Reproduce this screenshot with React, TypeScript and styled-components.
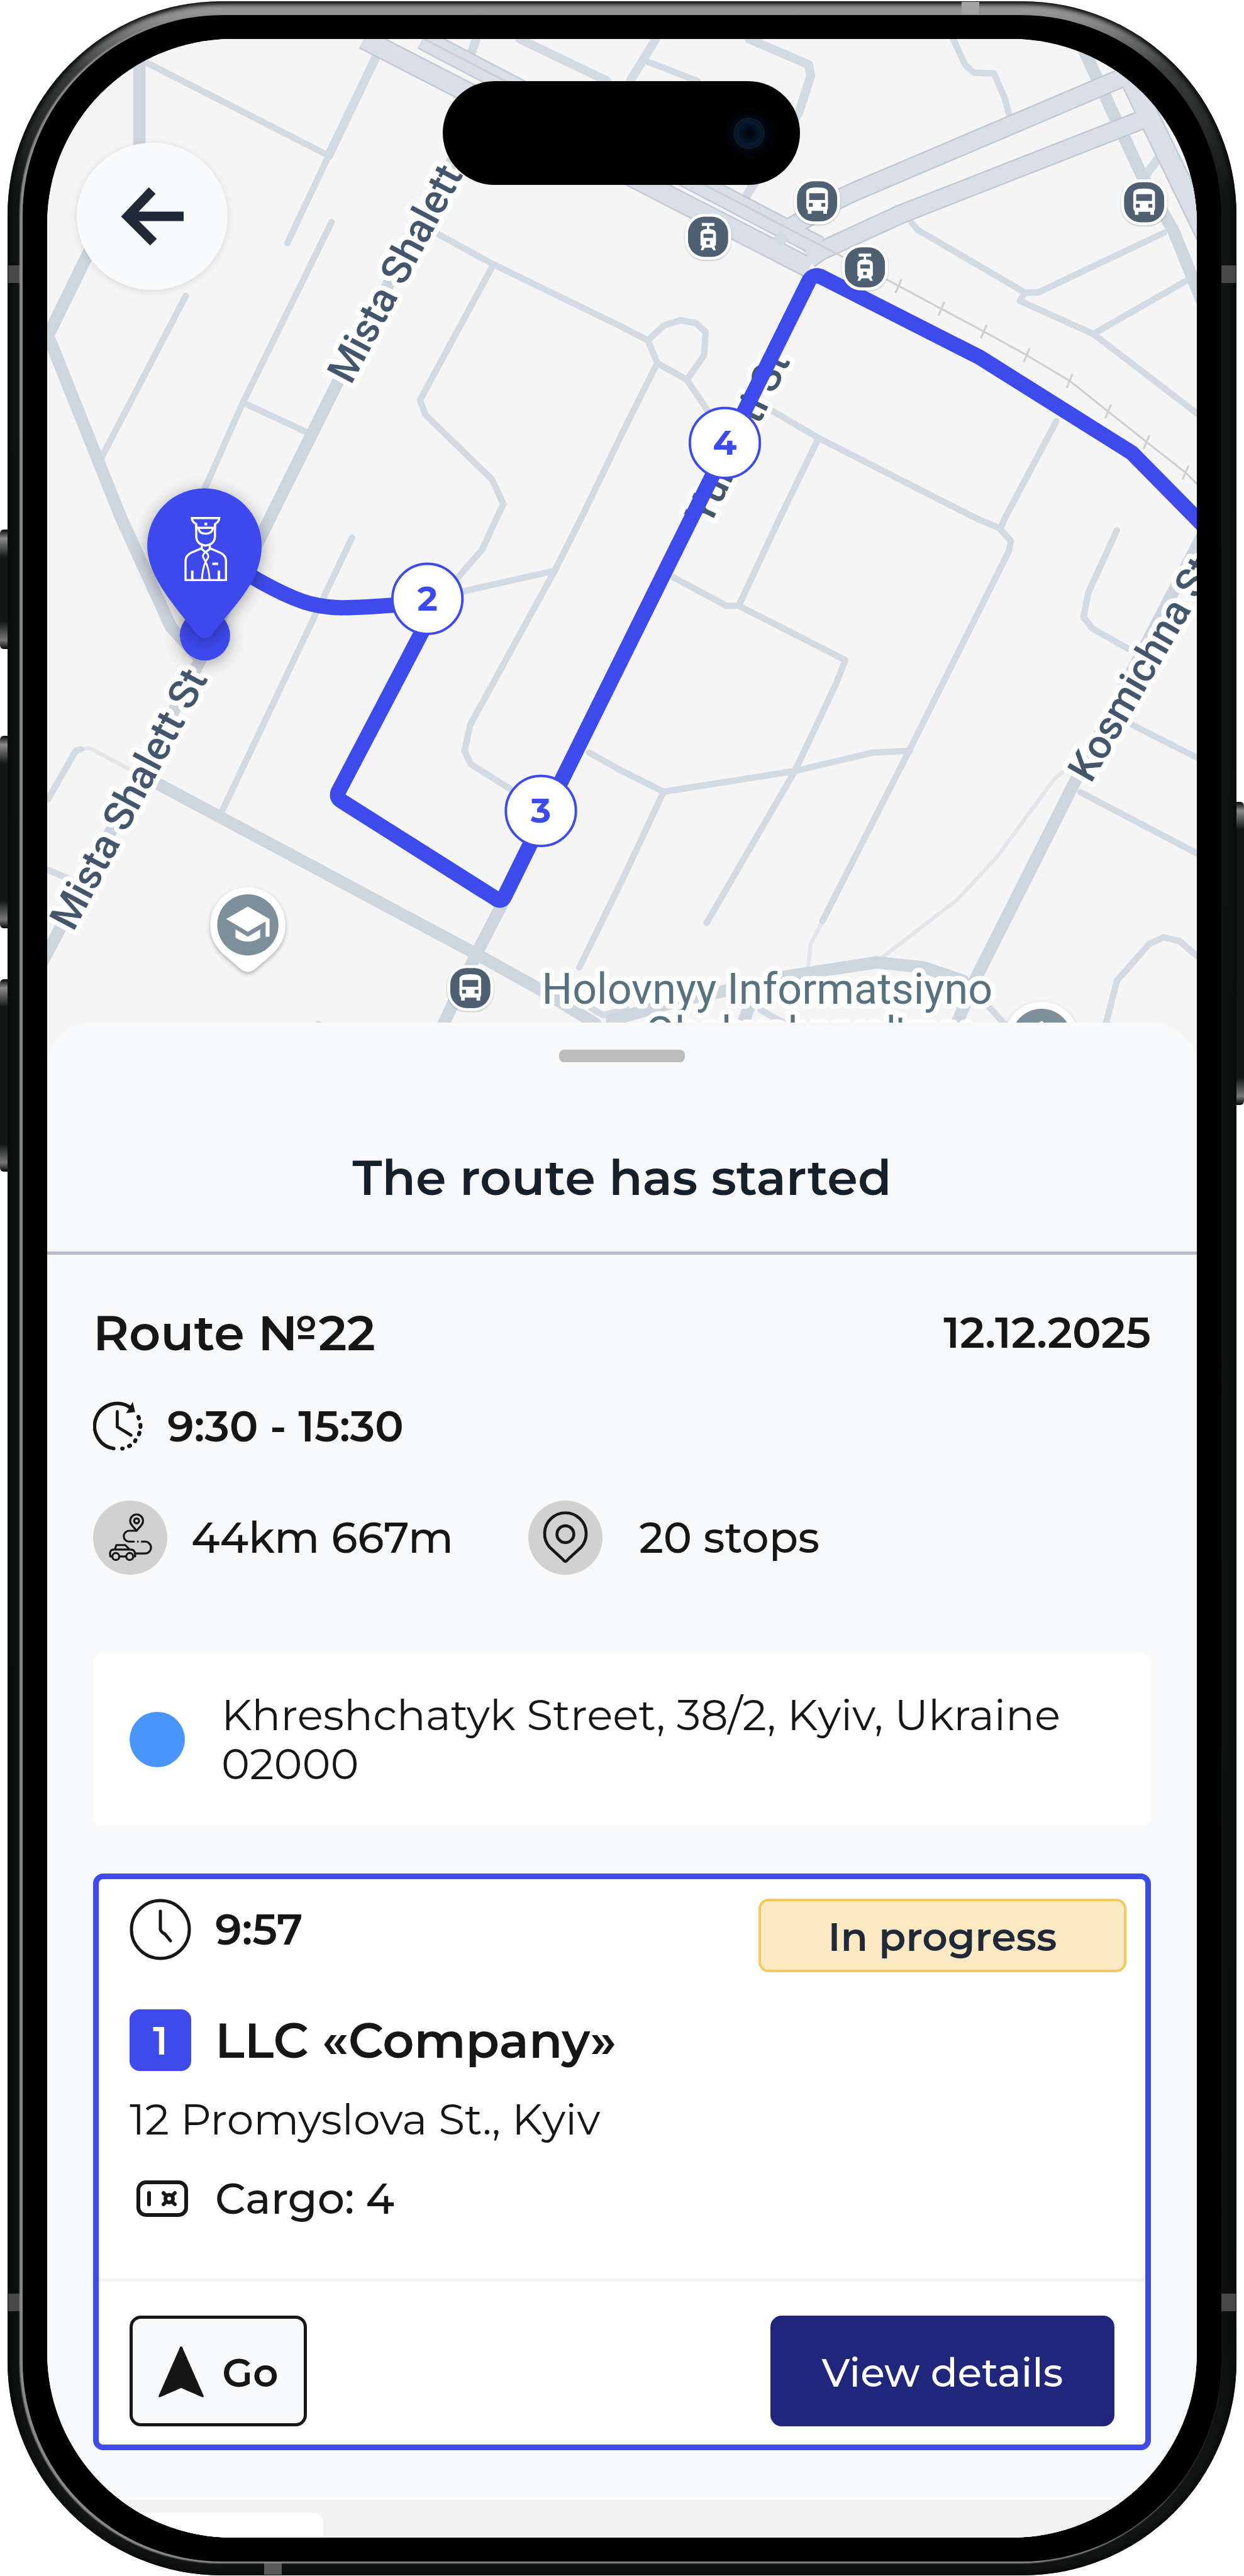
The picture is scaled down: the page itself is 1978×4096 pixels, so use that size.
import React from "react";
import styled, { createGlobalStyle } from "styled-components";

const FONT = `"Montserrat", "Inter", "Open Sans", sans-serif`;
const INK = "#161616";
const BLUE = "#3d4aec";
const SURFACE = "#f8f9fb";

const GlobalStyle = createGlobalStyle`
  *, *::before, *::after { box-sizing: border-box; }
  body { margin: 0; background: #fff; font-family: ${FONT}; color: ${INK}; }
  h1, h2, h3, p { margin: 0; font-weight: inherit; font-size: inherit; }
  button { font-family: inherit; cursor: pointer; margin: 0; padding: 0; }
  svg { display: block; flex: none; }
`;

/* ---------- device ---------- */

const Page = styled.div`
  padding: 2px 12px;
`;

const Frame = styled.div`
  position: relative;
  padding: 22px 24px;
  border-radius: 340px;
  background: linear-gradient(180deg, #9c9c9c 0, #8c8c8c 30px, #3a3c3c 110px, #101313 320px, #0d0f0f 3700px, #141616 4000px, #101212 100%);
  box-shadow: inset 0 0 7px 5px #0a0c0c;
`;

const Bezel = styled.div`
  position: relative;
  padding: 38px 39px;
  border-radius: 318px;
  background: #000;
  box-shadow: -3px 1px 2px 2px #8a8a8a;
`;

const Screen = styled.main`
  position: relative;
  overflow: hidden;
  border-radius: 294px;
  background: ${SURFACE};
`;

const SideKey = styled.div<{ $side: "left" | "right"; $top: number; $length: number }>`
  position: absolute;
  z-index: -1;
  ${(p) => p.$side}: -12px;
  top: ${(p) => p.$top}px;
  width: 20px;
  height: ${(p) => p.$length}px;
  border-radius: 6px;
  background: linear-gradient(180deg, #060707 0, #8a8a8a 14px, #151717 44px, #151717 calc(100% - 44px), #777 calc(100% - 14px), #060707 100%);
`;

const SideBand = styled.div<{ $side: "left" | "right"; $top: number }>`
  position: absolute;
  ${(p) => p.$side}: 1px;
  top: ${(p) => p.$top}px;
  width: 23px;
  height: 28px;
  background: #484848;
`;

const EdgeBand = styled.div<{ $edge: "top" | "bottom"; $left: number }>`
  position: absolute;
  ${(p) => p.$edge}: 1px;
  left: ${(p) => p.$left}px;
  width: 28px;
  height: 21px;
  background: ${(p) => (p.$edge === "top" ? "#a4a4a4" : "#5a5a5a")};
`;

const Island = styled.div`
  position: absolute;
  top: 67px;
  left: 50%;
  width: 568px;
  height: 165px;
  margin-left: -285px;
  padding-right: 56px;
  border-radius: 83px;
  background: #000;
  display: flex;
  align-items: center;
  justify-content: flex-end;
`;

const Camera = styled.span`
  width: 50px;
  height: 50px;
  border-radius: 50%;
  border: 3px solid #141820;
  background: radial-gradient(circle, #020304 0, #03101f 35%, #061a31 60%, #02060b 100%);
  box-shadow: 0 0 14px 8px #010a16;
`;

/* ---------- map ---------- */

const MapArea = styled.section`
  height: 1640px;
  background: #f5f5f5;
  svg { width: 100%; height: 100%; }
`;

const BackButton = styled.button`
  position: absolute;
  top: 165px;
  left: 47px;
  width: 240px;
  height: 234px;
  border: 0;
  border-radius: 50%;
  background: #f8fafc;
  box-shadow: 0 2px 12px rgba(0, 0, 0, 0.12);
  display: flex;
  align-items: center;
  justify-content: center;
`;

/* ---------- sheet ---------- */

const Sheet = styled.section`
  position: relative;
  margin-top: -76px;
  border-radius: 70px 70px 0 0;
  background: ${SURFACE};
`;

const SheetHeader = styled.header`
  display: flex;
  flex-direction: column;
  align-items: center;
  gap: 135px;
  padding: 43px 0 70px;
  border-bottom: 5px solid #b1bdc9;
`;

const Handle = styled.span`
  width: 200px;
  height: 20px;
  border-radius: 8px;
  background: #bdbdbd;
`;

const SheetTitle = styled.h1`
  font-size: 78px;
  line-height: 96px;
  font-weight: 600;
  color: #16202a;
`;

const Body = styled.div`
  display: flex;
  flex-direction: column;
  padding: 76px 73px 79px;
`;

const Row = styled.div<{ $gap?: number; $between?: boolean; $top?: number }>`
  display: flex;
  align-items: center;
  gap: ${(p) => p.$gap ?? 0}px;
  justify-content: ${(p) => (p.$between ? "space-between" : "flex-start")};
  margin-top: ${(p) => p.$top ?? 0}px;
`;

const Heading = styled.h2`
  font-size: 78px;
  line-height: 96px;
  font-weight: 600;
`;

const Label = styled.p<{ $weight?: number; $top?: number }>`
  margin-top: ${(p) => p.$top ?? 0}px;
  font-size: 68px;
  line-height: 80px;
  font-weight: ${(p) => p.$weight ?? 400};
`;

const Disc = styled.span`
  display: flex;
  width: 118px;
  height: 118px;
  border-radius: 50%;
  background: #d1d1d1;
`;

const AddressCard = styled.div`
  display: flex;
  align-items: center;
  gap: 58px;
  margin-top: 125px;
  padding: 59px 58px;
  border-radius: 16px;
  background: #fff;
`;

const Dot = styled.span`
  flex: none;
  width: 88px;
  height: 88px;
  border-radius: 50%;
  background: #4896fb;
`;

const AddressText = styled.p`
  font-size: 68px;
  line-height: 78px;
  font-weight: 400;
`;

const StopCard = styled.article`
  margin-top: 76px;
  border: 9px solid ${BLUE};
  border-radius: 16px;
  background: #fff;
`;

const StopInfo = styled.div`
  padding: 31px 30px 87px 49px;
`;

const StopHead = styled.div`
  display: flex;
  align-items: flex-start;
  justify-content: space-between;
`;

const Badge = styled.span`
  display: flex;
  align-items: center;
  justify-content: center;
  width: 585px;
  height: 117px;
  padding-top: 4px;
  border: 4px solid #f3c95d;
  border-radius: 16px;
  background: #fbe9c4;
  color: #1f2937;
  font-size: 63px;
  font-weight: 600;
`;

const NumberBox = styled.span`
  display: flex;
  align-items: center;
  justify-content: center;
  width: 98px;
  height: 98px;
  border-radius: 16px;
  background: ${BLUE};
  color: #fff;
  font-size: 63px;
  font-weight: 600;
`;

const StopActions = styled.div`
  display: flex;
  justify-content: space-between;
  padding: 54px 49px 29px;
  border-top: 5px solid #f3f3f3;
`;

const ActionButton = styled.button<{ $primary?: boolean }>`
  display: flex;
  align-items: center;
  justify-content: center;
  gap: 28px;
  width: ${(p) => (p.$primary ? 547 : 282)}px;
  height: 176px;
  padding-top: 4px;
  border: 5px solid ${(p) => (p.$primary ? "#20267b" : INK)};
  border-radius: 18px;
  background: ${(p) => (p.$primary ? "#20267b" : SURFACE)};
  color: ${(p) => (p.$primary ? "#fff" : INK)};
  font-size: 63px;
  font-weight: ${(p) => (p.$primary ? 500 : 600)};
`;

const TabBar = styled.footer`
  height: 60px;
  padding-top: 20px;
  background: #f2f2f2;
`;

const Tab = styled.div`
  width: 24%;
  height: 40px;
  border-top-right-radius: 16px;
  background: #fff;
`;

/* ---------- map drawing ---------- */

const minorRoads = [
  "M297 127L659 312", "M666 315L582 493", "M672 450L492 816L414 992", "M492 816L619 875", "M376 600L205 928",
  "M870 465L1000 536L1261 663L1313 690",
  "M1000 536L851 811L862 841L997 972L1020 1022L1005 1053L977 1114L925 1174",
  "M1332 736L1261 878L1178 1050L1124 1157L953 1469L941 1522L954 1549L1033 1599",
  "M937 1199L1124 1157", "M713 1090L449 1646", "M97 1620L153 1522L163 1519", "M97 1764L145 1784",
  "M1345 1605L1261 1784L1174 1961",
  "M1309 124L1414 164", "M1932 79L1956 131L1973 147L2015 149L2037 201L2046 235",
  "M1848 452L1860 466L2077 593L2104 593L2359 472", "M2077 593L2067 610L2216 677L2426 838", "M2216 677L2403 570",
  "M1313 690L1345 660L1379 649L1410 655L1430 673L1427 720L1392 770L1332 736Z", "M1392 770L1442 844",
  "M1567 834L1659 888L1977 1050L2025 1070L2049 1097L2045 1117L1844 1519L1667 1867",
  "M1659 888L1579 1053L1497 1228", "M2141 854L2037 1050L2028 1070",
  "M1366 1171L1472 1228L1497 1228L1713 1338L1695 1385L1611 1563L1432 1871",
  "M1194 1526L1261 1563L1345 1605L1611 1563L1768 1526L1844 1522",
  "M2190 1606L2426 1730", "M2294 1469L2426 1536", "M2286 1315L2214 1274L2196 1251L2206 1201L2264 1075",
  "M2426 1938L2391 1908L2358 1900L2329 1914L2264 1988L2242 2073L2260 2090", "M2005 2042L2040 2080", "M1542 2048L1600 2080",
  "M1198 2044L1222 2058L1270 2046", "M645 2076L690 2100",
];

const mediumRoads = [
  "M764 111L666 315", "M965 79L954 111", "M1053 79L1230 164", "M1329 79L1277 164",
  "M1518 79L1639 131L1643 154L1619 228L1514 395", "M2322 355L2350 318",
];

const majorRoads = [
  "M282 100V330L190 490L97 680L245 1050L346 1271L400 1330", "M933 295L683 777L547 1050L402 1345L113 1898L80 1960",
  "M314 1586L965 1934L1098 2008L1206 2075", "M1017 1834L965 1934L900 2073L860 2160",
  "M2440 1080L2178 1586L1977 1985L1940 2073L1920 2120", "M1583 1981L1776 1951L1872 1961L1952 1988",
  "M1240 2068L1390 2025L1474 2008", "M2198 104L2314 355L2379 469L2440 620", "M1518 2042L1500 2090",
];

const footPaths = [
  "M163 1519L181 1516L261 1559", "M1665 1871L1643 1914L1637 1968", "M2153 1566L2137 1579L2021 1737L1940 1824L1788 1941",
];

const highways = [
  { d: "M737 79L1640 543", w: 40 }, { d: "M856 79L1660 500", w: 41 },
  { d: "M1590 468L1703 402L1740 385L2276 157", w: 37 }, { d: "M1640 525L1663 509L1824 435L2314 243", w: 37 },
  { d: "M2252 79L2280 137L2448 482", w: 42 },
];

const rail = "M860 79L1699 516L1796 566L1908 626L1994 672L2081 720L2168 772L2246 834L2324 896L2403 958L2430 985";
const ties = [[1821, 580], [1908, 626], [1994, 672], [2081, 720], [2168, 772], [2246, 834], [2324, 896], [2403, 958]];

const StreetLabel = styled.text`
  font-family: "Roboto", sans-serif;
  font-size: 82px;
  font-weight: 500;
  fill: #44566b;
  stroke: #fff;
  stroke-width: 20px;
  stroke-linejoin: round;
  paint-order: stroke;
`;

const PlaceLabel = styled(StreetLabel)`
  font-size: 87px;
  font-weight: 400;
  fill: #587280;
`;

const StopNumber = styled.text`
  font-family: ${FONT};
  font-size: 70px;
  font-weight: 700;
  fill: ${BLUE};
  text-anchor: middle;
`;

const Sign = ({ x, y, children }: { x: number; y: number; children: React.ReactNode }) => (
  <g transform={`translate(${x} ${y}) scale(.3333)`} filter="url(#signShadow)">
    <rect x="-140" y="-140" width="280" height="280" rx="118" fill="#fff" />
    <rect x="-122" y="-122" width="244" height="244" rx="100" fill="#506172" />
    {children}
  </g>
);

const Bus = ({ x, y }: { x: number; y: number }) => (
  <Sign x={x} y={y}>
    <path fill="#fff" fillRule="evenodd" d="M-66 -55Q-66 -84 0 -84Q66 -84 66 -55V40L60 58V76H38V58H-34V76H-56V58L-66 40ZM-48 -49H48V-8H-48ZM-50 10H-26V33H-50ZM26 10H50V33H26Z" />
  </Sign>
);

const Tram = ({ x, y }: { x: number; y: number }) => (
  <Sign x={x} y={y}>
    <path fill="#fff" fillRule="evenodd" d="M-38 -84H38V-66H7V-48Q48 -44 48 -22V50L38 58L48 82H32L22 66H-20L-30 82H-46L-36 58L-46 50V-22Q-46 -44 -7 -48V-66H-38ZM-28 -18H30V7H-28ZM-11 26H11V47H-11Z" />
  </Sign>
);

const SchoolPin = ({ x, y }: { x: number; y: number }) => (
  <g transform={`translate(${x} ${y})`} filter="url(#signShadow)">
    <path fill="#fff" d="M-76 0A76 76 0 0 1 76 0C76 30 62 48 44 64L16 88Q0 102 -16 88L-44 64C-62 48 -76 30 -76 0Z" />
    <circle r="62" fill="#7b8f9b" />
    <path fill="#fff" d="M0 -37L44 -12V24H36V-7L0 14L-44 -12ZM-25 9L0 24L25 9V26Q0 42 -25 26Z" />
  </g>
);

const Stop = ({ x, y, n }: { x: number; y: number; n: number }) => (
  <g>
    <circle cx={x} cy={y} r="71" fill="#fff" stroke={BLUE} strokeWidth="5" />
    <StopNumber x={x} y={y + 24}>{n}</StopNumber>
  </g>
);

const DriverPin = () => (
  <g>
    <circle cx="415" cy="1288" r="51" fill={BLUE} filter="url(#pinShadow)" />
    <path
      filter="url(#pinShadow)"
      fill={BLUE}
      d="M298 1106A116 116 0 0 1 530 1106C530 1162 496 1206 458 1250L432 1282Q426 1293 416 1293Q406 1293 400 1287L370 1250C334 1204 298 1158 298 1106Z"
    />
    <g transform="translate(280 970) scale(.3333)" fill="none" stroke="#fff" strokeWidth="13" strokeLinejoin="miter">
      <path d="M325 241H492Q492 262 466 278V300H352V278Q325 262 325 241Z" />
      <path d="M352 278V350Q352 400 409 408Q466 400 466 350V278M366 302Q370 336 409 336Q448 336 454 302" />
      <path d="M386 405V430L409 448L434 430V405M384 425L320 452Q287 470 287 500V618H533V500Q533 470 500 452L436 425" />
      <path d="M409 448Q388 462 394 480L409 506L425 480Q430 462 409 448M409 506Q390 550 386 618M409 506Q430 550 433 618" strokeWidth="11" />
      <path d="M328 560V615M490 560V615M450 519H485" strokeWidth="15" />
      <path d="M402 277H419" strokeWidth="17" />
    </g>
  </g>
);

const CityMap = () => (
  <svg viewBox="95 79 2331 2091" preserveAspectRatio="xMidYMin slice" role="img" aria-label="Route map">
    <defs>
      <filter id="pinShadow" x="-40%" y="-40%" width="180%" height="180%">
        <feDropShadow dx="0" dy="6" stdDeviation="16" floodColor="#000" floodOpacity=".35" />
      </filter>
      <filter id="signShadow" x="-40%" y="-40%" width="180%" height="180%">
        <feDropShadow dx="0" dy="4" stdDeviation="4" floodColor="#3c3c50" floodOpacity=".4" />
      </filter>
    </defs>
    <g fill="none" strokeLinejoin="round" strokeLinecap="round">
      {footPaths.map((d) => <path key={d} d={d} stroke="#e3e5ea" strokeWidth="8" />)}
      {minorRoads.map((d) => <path key={d} d={d} stroke="#d2dae3" strokeWidth="13" />)}
      {mediumRoads.map((d) => <path key={d} d={d} stroke="#d2dae3" strokeWidth="18" />)}
      {majorRoads.map((d) => <path key={d} d={d} stroke="#cdd5df" strokeWidth="25" />)}
    </g>
    <g fill="none" strokeLinejoin="round">
      {highways.map((h) => <path key={h.d} d={h.d} stroke="#c0c9d2" strokeWidth={h.w + 3} />)}
      {highways.map((h) => <path key={h.d} d={h.d} stroke="#d9dfe8" strokeWidth={h.w - 3} />)}
      <path d="M1574 492L1592 476" stroke="#d2dae3" strokeWidth="24" />
      <path d={rail} stroke="#cdcfd2" strokeWidth="4" />
      {ties.map(([x, y]) => <path key={x} d={`M${x - 6} ${y + 14}L${x + 6} ${y - 14}`} stroke="#cdcfd2" strokeWidth="4" />)}
    </g>

    <StreetLabel transform="translate(711 782) rotate(-62)">Mista Shalett St</StreetLabel>
    <StreetLabel transform="translate(148 1890) rotate(-62)">Mista Shalett St</StreetLabel>
    <StreetLabel transform="translate(1438 1068) rotate(-64)">Yunosti St</StreetLabel>
    <StreetLabel transform="translate(2211 1590) rotate(-60)">Kosmichna St</StreetLabel>

    <g fill="none" stroke={BLUE} strokeWidth="31" strokeLinejoin="round">
      <path d="M430 1120C510 1170 560 1200 610 1218C670 1240 720 1232 866 1222" />
      <path d="M866 1260L688 1600Q678 1616 692 1624L1005 1822Q1017 1830 1023 1816L1142 1574L1640 568Q1650 554 1666 562L1985 724L2294 918L2440 1066" />
    </g>

    <Tram x={1435} y={480} />
    <Tram x={1753} y={542} />
    <Bus x={1656} y={408} />
    <Bus x={2319} y={410} />
    <Bus x={953} y={2003} />
    <SchoolPin x={502} y={1875} />
    <SchoolPin x={2111} y={2107} />
    <PlaceLabel x="1098" y="2035">Holovnyy Informatsiyno</PlaceLabel>
    <PlaceLabel x="1308" y="2123">Obchyslyuvalʹnyy</PlaceLabel>

    <DriverPin />
    <Stop x={866} y={1214} n={2} />
    <Stop x={1096} y={1644} n={3} />
    <Stop x={1469} y={898} n={4} />
  </svg>
);

/* ---------- icons ---------- */

const ArrowLeft = () => (
  <svg width="100" height="92" viewBox="0 0 100 92" fill="none" stroke="#1f2937" strokeWidth="15" aria-hidden="true">
    <path d="M50 5L11 46L52 87M12 46H100" strokeLinejoin="miter" />
  </svg>
);

const ShiftClock = () => (
  <svg width="80" height="80" viewBox="187 2842 102 102" fill="none" stroke={INK} strokeWidth="7" strokeLinecap="round" aria-hidden="true">
    <path d="M229 2938A46 46 0 1 1 264 2856" />
    <path d="M236 2863V2894L264 2911" strokeWidth="6" />
    <path d="M267 2846L271 2863L256 2865Z" fill={INK} strokeWidth="2" />
    <path d="M279 2874L280 2877M283 2890V2894M281 2906L280 2909M273 2921L272 2923M262 2932L260 2933M247 2938H246" strokeWidth="8" />
  </svg>
);

const RouteIcon = () => (
  <svg width="118" height="118" viewBox="187 3042 150 150" fill="none" stroke={INK} strokeWidth="4" strokeLinejoin="round" aria-hidden="true">
    <path d="M275 3103C268 3094 262 3091 262 3083A13 13 0 0 1 288 3083C288 3091 282 3094 275 3103Z" />
    <circle cx="275" cy="3083" r="5" />
    <path d="M275 3103H260A11 11 0 0 0 260 3125H271M276 3125H279M284 3125H292A12 12 0 0 1 292 3149H273" />
    <path d="M231 3141L234 3132H252L261 3141M226 3155H222Q219 3141 229 3141H263Q273 3141 272 3155H269M241 3155H254" />
    <circle cx="233" cy="3155" r="7" />
    <circle cx="261" cy="3155" r="7" />
  </svg>
);

const PinIcon = () => (
  <svg width="118" height="118" viewBox="0 0 150 150" fill="none" stroke={INK} strokeWidth="6" strokeLinejoin="round" aria-hidden="true">
    <path d="M75 123Q73 123 70 119L43 94A42 42 0 1 1 107 94L80 119Q77 123 75 123Z" />
    <circle cx="75" cy="68" r="17" />
  </svg>
);

const ClockIcon = () => (
  <svg width="98" height="98" viewBox="0 0 98 98" fill="none" stroke={INK} strokeWidth="5" strokeLinecap="round" aria-hidden="true">
    <circle cx="49" cy="49" r="46" />
    <path d="M49 20V49Q50 53 56 56L65 67" />
  </svg>
);

const CargoIcon = () => (
  <svg width="98" height="72" viewBox="0 0 98 72" fill="none" stroke={INK} strokeWidth="6" strokeLinecap="round" aria-hidden="true">
    <rect x="14" y="10" width="76" height="52" rx="12" />
    <path d="M31 27V45" strokeWidth="6" />
    <circle cx="63" cy="36" r="6" />
    <path d="M54 27L58 31M72 27L68 31M54 45L58 41M72 45L68 41" strokeWidth="6" />
  </svg>
);

const NavArrow = () => (
  <svg width="74" height="82" viewBox="0 0 74 82" fill={INK} aria-hidden="true">
    <path d="M37 0Q39 0 40 4L73 79Q73 82 69 80L37 66L5 80Q1 82 1 79L34 4Q35 0 37 0Z" />
  </svg>
);

export default function App() {
  return (
    <Page>
      <GlobalStyle />
      <Frame>
        <SideKey $side="left" $top={840} $length={190} />
        <SideKey $side="left" $top={1168} $length={306} />
        <SideKey $side="left" $top={1555} $length={306} />
        <SideKey $side="right" $top={1273} $length={482} />
        <SideBand $side="left" $top={420} />
        <SideBand $side="right" $top={420} />
        <SideBand $side="left" $top={3645} />
        <SideBand $side="right" $top={3645} />
        <EdgeBand $edge="top" $left={1517} />
        <EdgeBand $edge="bottom" $left={408} />
        <Bezel>
          <Screen>
            <MapArea>
              <CityMap />
            </MapArea>
            <BackButton type="button" aria-label="Back">
              <ArrowLeft />
            </BackButton>
            <Island>
              <Camera />
            </Island>

            <Sheet>
              <SheetHeader>
                <Handle />
                <SheetTitle>The route has started</SheetTitle>
              </SheetHeader>
              <Body>
                <Row $between>
                  <Heading>Route №22</Heading>
                  <Label $weight={600}>12.12.2025</Label>
                </Row>
                <Row $gap={38} $top={61}>
                  <ShiftClock />
                  <Label $weight={600}>9:30 - 15:30</Label>
                </Row>
                <Row $gap={119} $top={78}>
                  <Row $gap={38}>
                    <Disc><RouteIcon /></Disc>
                    <Label $weight={500}>44km 667m</Label>
                  </Row>
                  <Row $gap={58}>
                    <Disc><PinIcon /></Disc>
                    <Label $weight={500}>20 stops</Label>
                  </Row>
                </Row>

                <AddressCard>
                  <Dot />
                  <AddressText>Khreshchatyk Street, 38/2, Kyiv, Ukraine 02000</AddressText>
                </AddressCard>

                <StopCard>
                  <StopInfo>
                    <StopHead>
                      <Row $gap={38}>
                        <ClockIcon />
                        <Label $weight={600}>9:57</Label>
                      </Row>
                      <Badge>In progress</Badge>
                    </StopHead>
                    <Row $gap={38} $top={59}>
                      <NumberBox>1</NumberBox>
                      <Heading>LLC «Company»</Heading>
                    </Row>
                    <Label $top={37}>12 Promyslova St., Kyiv</Label>
                    <Row $gap={38} $top={46}>
                      <CargoIcon />
                      <Label $weight={500}>Cargo: 4</Label>
                    </Row>
                  </StopInfo>
                  <StopActions>
                    <ActionButton type="button">
                      <NavArrow />
                      Go
                    </ActionButton>
                    <ActionButton type="button" $primary>View details</ActionButton>
                  </StopActions>
                </StopCard>
              </Body>
              <TabBar>
                <Tab />
              </TabBar>
            </Sheet>
          </Screen>
        </Bezel>
      </Frame>
    </Page>
  );
}
